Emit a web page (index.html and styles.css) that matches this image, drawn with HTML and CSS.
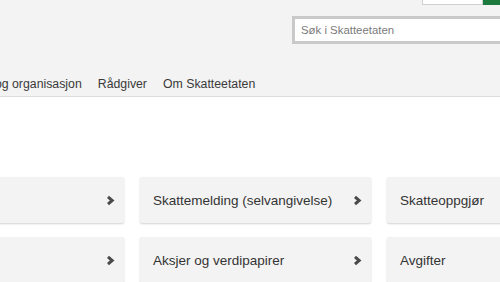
FILE: index.html
```html
<!DOCTYPE html>
<html lang="no">
<head>
    <meta charset="UTF-8">
    <meta name="viewport" content="width=device-width, initial-scale=1.0">
    <title>Skatteetaten</title>
    <link rel="stylesheet" href="styles.css">
</head>
<body>

    <div class="header">
        <div class="wrap">
            <div class="topbar">
                <div class="login">
                    <span class="login-field"></span>
                    <span class="login-btn"></span>
                </div>
            </div>

            <div class="search-row">
                <div class="search">Søk i Skatteetaten</div>
            </div>

            <ul class="nav">
                <li>Person</li>
                <li>Bedrift og organisasjon</li>
                <li>Rådgiver</li>
                <li>Om Skatteetaten</li>
            </ul>
        </div>
    </div>

    <div class="wrap">
        <div class="cards">
            <a class="card">
                <span>Forskuddsskatt</span>
                <svg class="chev" width="9" height="11" viewBox="0 0 9 11"><polyline points="2,1.8 6.2,5.5 2,9.2"/></svg>
            </a>
            <a class="card">
                <span>Skattemelding (selvangivelse)</span>
                <svg class="chev" width="9" height="11" viewBox="0 0 9 11"><polyline points="2,1.8 6.2,5.5 2,9.2"/></svg>
            </a>
            <a class="card">
                <span>Skatteoppgjør</span>
                <svg class="chev" width="9" height="11" viewBox="0 0 9 11"><polyline points="2,1.8 6.2,5.5 2,9.2"/></svg>
            </a>
            <a class="card">
                <span>Skattekort</span>
                <svg class="chev" width="9" height="11" viewBox="0 0 9 11"><polyline points="2,1.8 6.2,5.5 2,9.2"/></svg>
            </a>
            <a class="card">
                <span>Aksjer og verdipapirer</span>
                <svg class="chev" width="9" height="11" viewBox="0 0 9 11"><polyline points="2,1.8 6.2,5.5 2,9.2"/></svg>
            </a>
            <a class="card">
                <span>Avgifter</span>
                <svg class="chev" width="9" height="11" viewBox="0 0 9 11"><polyline points="2,1.8 6.2,5.5 2,9.2"/></svg>
            </a>
        </div>
    </div>

</body>
</html>
```

FILE: styles.css
```css
body{
    margin: 0;
    background: #fff;
    font-family: "Liberation Sans", Arial, sans-serif;
    color: #333;
    overflow: hidden;
}
.wrap{
    width: 725px;
    margin-left: -107px;
}
.header{
    background: #f3f3f3;
    border-bottom: 1px solid #dcdcdc;
    height: 96px;
}
.topbar{
    height: 5px;
    display: flex;
    justify-content: flex-end;
}
.login{
    display: flex;
    margin-right: 107px;
}
.login-field{
    width: 59px;
    height: 4px;
    background: #fff;
    border: 1px solid #cfcfcf;
    border-top: none;
}
.login-btn{
    width: 28px;
    height: 5px;
    background: #1d7a3e;
}
.search-row{
    display: flex;
    justify-content: flex-end;
    margin-top: 11px;
}
.search{
    width: 314px;
    height: 22px;
    line-height: 22px;
    border: 3px solid #c9c9c9;
    background: #fff;
    padding-left: 6px;
    font-size: 11.4px;
    color: #7a7a7a;
}
.nav{
    list-style: none;
    margin: 0;
    padding: 0 0 0 8px;
    margin-top: 30px;
    display: flex;
    gap: 16px;
    font-size: 12.3px;
    line-height: 20px;
    color: #3a3a3a;
}
.cards{
    margin-top: 80px;
    display: grid;
    grid-template-columns: repeat(3, 231px);
    column-gap: 16px;
    row-gap: 14px;
}
.card{
    height: 46px;
    background: #f3f3f3;
    border-radius: 2px;
    box-shadow: 0 1px 2px rgba(0,0,0,.18);
    display: flex;
    align-items: center;
    justify-content: space-between;
    padding: 0 9px 0 13px;
    font-size: 13.5px;
    color: #333;
}
.chev{
    fill: none;
    stroke: #4a4a4a;
    stroke-width: 3;
}
```
